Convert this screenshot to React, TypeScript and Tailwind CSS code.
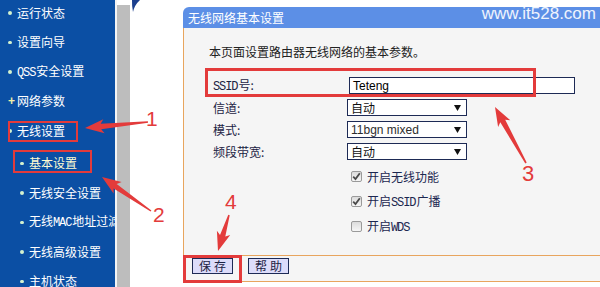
import React from "react";

const RED = "#e33b3b";

function Mono({ children }: { children: React.ReactNode }) {
  return <span className="font-['Liberation_Mono',monospace] text-[12px] tracking-[-1.1px] mr-[1px]">{children}</span>;
}

function arrowPoints(tx: number, ty: number, px: number, py: number, tailW = 1.5, neckW = 5.5, headW = 14, headL = 16) {
  const dx = px - tx;
  const dy = py - ty;
  const L = Math.hypot(dx, dy);
  const ux = dx / L;
  const uy = dy / L;
  const nx = -uy;
  const ny = ux;
  const kx = px - ux * headL;
  const ky = py - uy * headL;
  const bx = px - ux * (headL + 3);
  const by = py - uy * (headL + 3);
  const pts: [number, number][] = [
    [tx + (nx * tailW) / 2, ty + (ny * tailW) / 2],
    [kx + (nx * neckW) / 2, ky + (ny * neckW) / 2],
    [bx + (nx * headW) / 2, by + (ny * headW) / 2],
    [px, py],
    [bx - (nx * headW) / 2, by - (ny * headW) / 2],
    [kx - (nx * neckW) / 2, ky - (ny * neckW) / 2],
    [tx - (nx * tailW) / 2, ty - (ny * tailW) / 2],
  ];
  return pts.map((p) => p.map((v) => v.toFixed(1)).join(",")).join(" ");
}

function Bullet({ plus }: { plus?: boolean }) {
  if (plus) {
    return <span className="w-[8px] shrink-0 text-[#f4f0a8] text-[12px] leading-none font-bold font-['Liberation_Sans',sans-serif]">+</span>;
  }
  return (
    <span className="w-[8px] shrink-0 flex items-center">
      <span className="block w-[3.5px] h-[3.5px] rounded-full bg-[#d4f2cf]" />
    </span>
  );
}

function SideItem({ children, plus, sub, active }: { children: React.ReactNode; plus?: boolean; sub?: boolean; active?: boolean }) {
  return (
    <div className={`h-[29.5px] flex items-center whitespace-nowrap ${sub ? "pl-[20px]" : "pl-[8px]"}`}>
      <Bullet plus={plus} />
      <span className={`ml-[1px] shrink-0 text-[12px] leading-none ${active ? "text-[#fffbd2]" : "text-white"}`}>{children}</span>
    </div>
  );
}

function Select({ value, latin }: { value: string; latin?: boolean }) {
  return (
    <div className="w-[120px] h-[17px] border border-[#1d2a55] bg-white flex items-center justify-between pl-[3px] pr-[5px]">
      <span className={latin ? "font-['Liberation_Sans',sans-serif] text-[12px] text-[#2d2d2d] leading-none" : "text-[12px] text-[#111] leading-none"}>{value}</span>
      <svg width="7" height="6" viewBox="0 0 7 6">
        <polygon points="0,0 7,0 3.5,6" fill="#111" />
      </svg>
    </div>
  );
}

function Check({ checked }: { checked: boolean }) {
  return (
    <span className="w-[11px] h-[11px] shrink-0 border border-[#9a9a9a] rounded-[2px] bg-gradient-to-b from-[#dcdcdc] to-[#f6f6f6] flex items-center justify-center">
      {checked && (
        <svg width="9" height="9" viewBox="0 0 9 9">
          <path d="M1.2 4.6 L3.5 7 L7.8 1.3" fill="none" stroke="#4a4a4a" strokeWidth="1.8" />
        </svg>
      )}
    </span>
  );
}

function CheckRow({ checked, children }: { checked: boolean; children: React.ReactNode }) {
  return (
    <div className="h-[25px] flex items-center gap-[5px]">
      <Check checked={checked} />
      <span className="text-[12px] leading-none text-[#1c2750]">{children}</span>
    </div>
  );
}

export default function App() {
  return (
    <div className="relative w-[600px] h-[287px] overflow-hidden bg-white flex font-['Noto_Sans_CJK_SC','Noto_Sans',sans-serif]">
      {/* Sidebar */}
      <aside className="w-[115px] h-full shrink-0 bg-[#0b4fa4] overflow-hidden">
        <div className="mt-[-2px]">
          <SideItem>运行状态</SideItem>
          <SideItem>设置向导</SideItem>
          <SideItem><Mono>QSS</Mono>安全设置</SideItem>
          <SideItem plus>网络参数</SideItem>
          <SideItem>无线设置</SideItem>
        </div>
        <div className="mt-[3px]">
          <SideItem sub active>基本设置</SideItem>
          <SideItem sub>无线安全设置</SideItem>
          <SideItem sub>无线<Mono>MAC</Mono>地址过滤</SideItem>
          <SideItem sub>无线高级设置</SideItem>
          <SideItem sub>主机状态</SideItem>
        </div>
      </aside>
      <div className="w-[2px] shrink-0 bg-[#f4f4f4]" />
      <div className="w-[13px] shrink-0 mt-[5px] bg-[#bdbdbd]" />
      <div className="w-[53px] shrink-0 relative">
        <svg className="absolute left-0 top-0" width="20" height="16" viewBox="0 0 20 16">
          <path d="M2 0 L10 0 Q4.5 5 3 12 Q1.8 6 2 0 Z" fill="#1b3f8e" />
        </svg>
      </div>

      {/* Main panel */}
      <main className="flex-1 flex flex-col pt-[7px]">
        <div className="h-[21px] bg-[#5c8fe6] rounded-tl-[6px] flex items-center pl-[5px]">
          <span className="text-white text-[12px] leading-none">无线网络基本设置</span>
        </div>
        <div className="h-[227px] border-l-[1.5px] border-[#e8a55e] bg-[#f5f5f5] pl-[25px] pt-[16px]">
          <p className="text-[12px] leading-[16px] text-[#222]">本页面设置路由器无线网络的基本参数。</p>
          <div className="ml-[4px] mt-[17px] flex flex-col gap-[5px]">
            <div className="h-[17px] flex items-center">
              <span className="w-[136px] text-[12px] leading-none text-[#1c2344]"><Mono>SSID</Mono>号:</span>
              <div className="w-[226px] h-[17px] border border-[#1d2a55] bg-white flex items-center pl-[3px]">
                <span className="font-['Liberation_Sans',sans-serif] text-[12px] leading-none text-black">Teteng</span>
              </div>
            </div>
            <div className="h-[17px] flex items-center">
              <span className="w-[134px] text-[12px] leading-none text-[#1c2344]">信道:</span>
              <Select value="自动" />
            </div>
            <div className="h-[17px] flex items-center">
              <span className="w-[134px] text-[12px] leading-none text-[#1c2344]">模式:</span>
              <Select value="11bgn mixed" latin />
            </div>
            <div className="h-[17px] flex items-center">
              <span className="w-[134px] text-[12px] leading-none text-[#1c2344]">频段带宽:</span>
              <Select value="自动" />
            </div>
          </div>
          <div className="ml-[142px] mt-[4px] flex flex-col">
            <CheckRow checked>开启无线功能</CheckRow>
            <CheckRow checked>开启<Mono>SSID</Mono>广播</CheckRow>
            <CheckRow checked={false}>开启<Mono>WDS</Mono></CheckRow>
          </div>
        </div>
        <div className="h-[27px] border-y-[1.5px] border-l-[1.5px] border-[#e8a55e] bg-[#f5f5f5] flex items-start pt-[2px] pl-[8px] gap-[15px]">
          <button className="w-[41px] h-[16px] border border-[#1d2a55] bg-[#dcdcfa] text-[12px] leading-none text-[#1c2344] tracking-[3px] pl-[3px]">保存</button>
          <button className="w-[41px] h-[16px] border border-[#1d2a55] bg-[#dcdcfa] text-[12px] leading-none text-[#1c2344] tracking-[3px] pl-[3px]">帮助</button>
        </div>
      </main>

      {/* Watermark */}
      <span className="absolute top-[5px] right-[4px] font-['Liberation_Sans',sans-serif] text-[17px] leading-[17px] text-white/90">www.it528.com</span>

      {/* Annotation boxes */}
      <div className="absolute left-[8px] top-[121px] w-[70px] h-[21px] border-[2.5px] border-[#e33b3b]" />
      <div className="absolute left-[13px] top-[150px] w-[79px] h-[23px] border-[2.5px] border-[#e33b3b]" />
      <div className="absolute left-[205px] top-[68px] w-[331px] h-[29px] border-[3px] border-[#e33b3b]" />
      <div className="absolute left-[183px] top-[255px] w-[59px] h-[28px] border-[3px] border-[#e33b3b]" />

      {/* Arrows */}
      <svg className="absolute inset-0 pointer-events-none" width="600" height="287" viewBox="0 0 600 287">
        <polygon points={arrowPoints(148, 122, 85, 128)} fill={RED} />
        <polygon points={arrowPoints(151, 211, 102, 177)} fill={RED} />
        <polygon points={arrowPoints(526, 163, 495, 107)} fill={RED} />
        <polygon points={arrowPoints(229, 215, 218, 251)} fill={RED} />
      </svg>

      {/* Numbers */}
      <span className="absolute left-[146px] top-[108px] font-['Liberation_Sans',sans-serif] text-[21px] leading-[21px] text-[#e33b3b]">1</span>
      <span className="absolute left-[153px] top-[204px] font-['Liberation_Sans',sans-serif] text-[21px] leading-[21px] text-[#e33b3b]">2</span>
      <span className="absolute left-[522px] top-[163px] font-['Liberation_Sans',sans-serif] text-[22px] leading-[22px] text-[#e33b3b]">3</span>
      <span className="absolute left-[225px] top-[191px] font-['Liberation_Sans',sans-serif] text-[21px] leading-[21px] text-[#e33b3b]">4</span>
    </div>
  );
}
